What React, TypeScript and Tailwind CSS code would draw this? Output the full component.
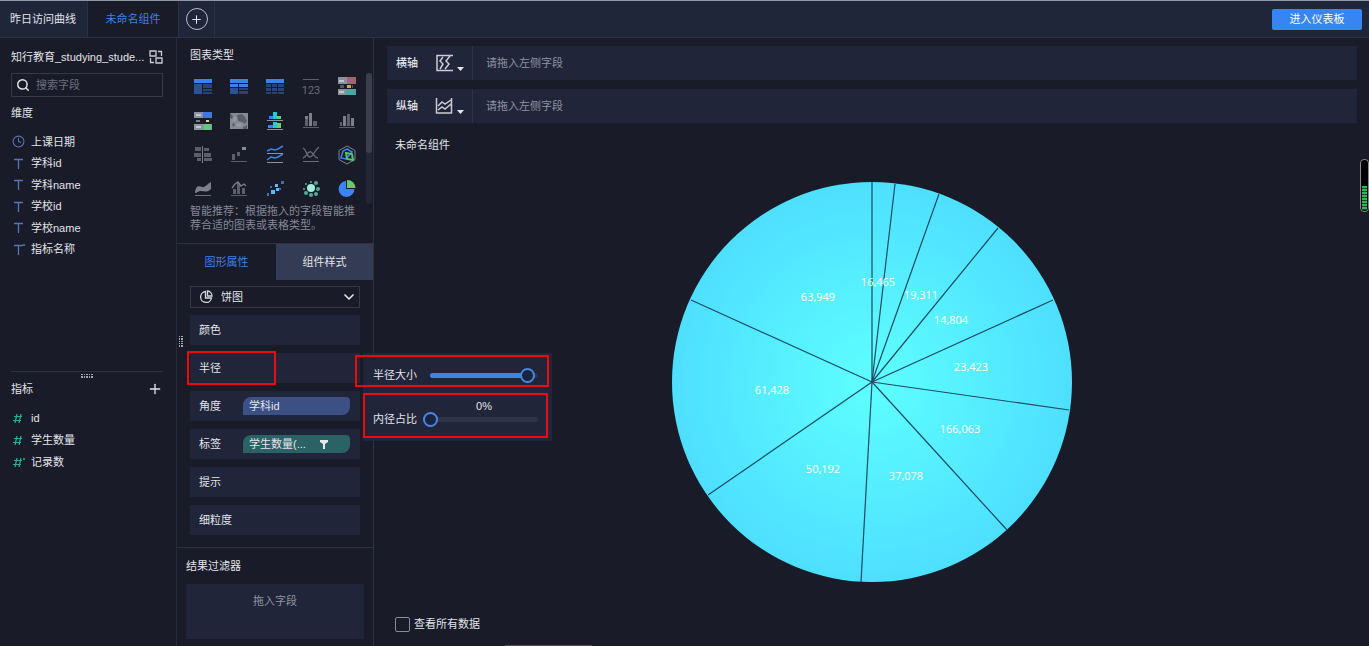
import React, { useState } from 'react'
import { ChevronDown, Clock, Plus, Search } from 'lucide-react'

const dimensions = [
  { name: '上课日期', type: 'date' },
  { name: '学科id', type: 'text' },
  { name: '学科name', type: 'text' },
  { name: '学校id', type: 'text' },
  { name: '学校name', type: 'text' },
  { name: '指标名称', type: 'calc' },
]

const metrics = [
  { name: 'id', calc: false },
  { name: '学生数量', calc: false },
  { name: '记录数', calc: true },
]

// outer end of every line between two slices
const sliceEdges = [
  [200, 0],
  [223, 2],
  [267, 12],
  [326, 46],
  [381, 118],
  [397, 228],
  [335, 348],
  [189, 400],
  [36, 313],
  [19, 118],
]

const sliceLabels = [
  { x: 206, y: 100, value: '16,465' },
  { x: 249, y: 113, value: '19,311' },
  { x: 279, y: 138, value: '14,804' },
  { x: 299, y: 185, value: '23,423' },
  { x: 288, y: 247, value: '166,063' },
  { x: 234, y: 294, value: '37,078' },
  { x: 151, y: 287, value: '50,192' },
  { x: 100, y: 208, value: '61,428' },
  { x: 146, y: 115, value: '63,949' },
]

const chartIcons = [
  // tables
  <>
    <path fill="#3b82ee" d="M0 1h18v4H0z" />
    <path fill="#2b5292" d="M0 6h8v10H0z" />
    <path fill="#26447a" d="M9 6h9v4H9zM9 11h9v2H9zM9 14h9v2H9z" />
  </>,
  <>
    <path fill="#3b82ee" d="M0 1h18v4H0zM0 6h8v3H0zM9 6h9v3H9z" />
    <path fill="#2b5292" d="M0 10h8v6H0z" />
    <path fill="#26447a" d="M9 10h9v2H9zM9 13h9v3H9z" />
  </>,
  <>
    <path fill="#3b82ee" d="M0 1h18v4H0z" />
    <path fill="#26447a" d="M0 6h5v3H0zM6 6h5v3H6zM12 6h6v3h-6zM0 10h5v3H0zM6 10h5v3H6zM12 10h6v3h-6zM0 14h5v2H0zM6 14h5v2H6zM12 14h6v2h-6z" />
  </>,
  // indicator card
  <>
    <path fill="#5c5f6a" d="M1 1h16v1H1z" />
    <text x="9" y="16" textAnchor="middle" fontSize="11" fontFamily="Liberation Sans Narrow, Roboto, sans-serif" fill="#6a6d78">123</text>
  </>,
  // detail blocks
  <>
    <path fill="#8d919d" d="M0 -1h10v7H0zM0 11h9v6H0z" />
    <path fill="#a3656e" d="M9 -1h9v7H9z" />
    <path fill="#4fa6a0" d="M8 11h10v6H8z" />
    <path fill="#c3c6cd" d="M1 2h5v2H1zM1 13h5v2H1z" />
    <path fill="#555967" d="M2 7h4v3H2zM14 7h1v3h-1z" />
    <path fill="#e2a13a" d="M9 7h4v3H9z" />
  </>,
  <>
    <path fill="#8d919d" d="M0 0h10v6H0zM0 12h10v6H0zM17 12h1v6h-1z" />
    <path fill="#3f78dc" d="M9 0h9v6H9z" />
    <path fill="#5fca7a" d="M10 12h7v6h-7z" />
    <path fill="#c3c6cd" d="M2 2h5v2H2zM2 14h5v2H2z" />
    <path fill="#777b86" d="M2 8h4v2H2z" />
    <path fill="#f2d24a" d="M12 8h3v2h-3z" />
  </>,
  // map
  <>
    <path fill="#868a95" d="M0 1h18v16H0z" />
    <path fill="#5a5e6b" d="M0 1l3 3-1 3-2-1zM7 3l5-1 3 3 2 4-2 3-3-2-4-1zM2 12l2-1 1 2-2 2zM13 15l4-2v4h-4z" />
    <path fill="#9699a2" d="M4 4l3 1-1 4H3zM6 12l5-1 1 3-5 1z" />
  </>,
  // column charts
  <>
    <path fill="#8d919d" d="M1 8h16v1H1zM1 17h16v1H1z" />
    <path fill="#3b82ee" d="M3 4h4v3H3zM2 13h5v3H2z" />
    <path fill="#27c8d8" d="M7 0h4v7H7zM7 10h4v6H7z" />
    <path fill="#65d272" d="M11 4h4v3h-4zM11 11h4v5h-4z" />
  </>,
  <>
    <path fill="#5c5f6a" d="M1 15h16v1H1zM3 7h3v7H3zM11 9h4v5h-4z" />
    <path fill="#7c7f8a" d="M7 1h3v13H7zM3 4h3v3H3z" />
  </>,
  <>
    <path fill="#5c5f6a" d="M1 15h16v1H1zM2 10h2v4H2zM9 2h3v12H9z" />
    <path fill="#7c7f8a" d="M5 4h3v10H5zM13 6h3v8h-3z" />
  </>,
  // bar and waterfall charts
  <>
    <path fill="#7c7f8a" d="M8 0h1v17H8z" />
    <path fill="#5c5f6a" d="M1 1h6v4H1zM10 2h5v3h-5zM0 7h7v4H0zM10 7h7v4h-7zM3 12h4v3H3zM10 12h8v3h-8z" />
  </>,
  <>
    <path fill="#5c5f6a" d="M1 15h16v1H1zM2 8h3v6H2zM7 6h3v4H7z" />
    <path fill="#868a95" d="M12 1h4v3h-4z" />
  </>,
  // line charts
  <g fill="none">
    <path stroke="#3b82ee" strokeWidth="1.5" d="M1 5l4-2 4 1 3-1 5-3M1 14l4-3 4 1 3-1 5-3" />
    <path stroke="#8d919d" d="M1 7.500h16M1 16.500h16" />
  </g>,
  <g fill="none" stroke="#6a6d78">
    <path d="M1 15.500h16" />
    <path strokeWidth="1.300" d="M1 2c3 1 4 9 7 9s4-6 9-10M1 12c4-1 5-8 8-6s4 6 7 6" />
  </g>,
  // radar
  <g fill="none">
    <path stroke="#7e828d" d="M9 0l8 4.500v9L9 18l-8-4.500v-9z" />
    <path stroke="#3b82ee" strokeWidth="1.500" d="M9 3l5 3-6 7-5-1 2-7z" />
    <path stroke="#4fc878" strokeWidth="2" d="M8 7l6 1 1 6-6-1z" />
  </g>,
  // area
  <>
    <path fill="#7c7f8a" d="M1 12c1-7 4-6 7-5s5-3 9-5v7c-4 4-7 2-10 2s-4 2-6 2z" />
    <path fill="#6a6d78" d="M1 15h16v1H1z" />
  </>,
  <>
    <path fill="#5c5f6a" d="M1 15h16v1H1zM3 9h3v5H3zM7 3h3v11H7zM12 8h3v6h-3z" />
    <path fill="none" stroke="#7c7f8a" strokeWidth="1.300" d="M2 8l3-4 3-2 3 4 3-2 2 2" />
  </>,
  // scatter
  <>
    <path fill="#3b6fb8" d="M1 13h2v3H1zM15 1h3v3h-3zM4 6h2v2H4zM13 8h2v2h-2z" />
    <path fill="#62b6e8" d="M5 10h4v4H5zM10 8h3v3h-3zM9 4h3v3H9z" />
  </>,
  <>
    <circle cx="9" cy="8" r="4" fill="#a5ecdc" />
    <g fill="#4cae9a">
      <circle cx="9" cy="2" r="1" />
      <circle cx="14" cy="3" r="2" />
      <circle cx="16" cy="9" r="2" />
      <circle cx="14" cy="14" r="2" />
      <circle cx="9" cy="15" r="2" />
      <circle cx="4" cy="13" r="2" />
      <circle cx="2" cy="9" r="1" />
      <circle cx="4" cy="4" r="1" />
    </g>
  </>,
  // pie
  <>
    <path fill="#3b82f2" d="M8 1a8 8 0 1 0 8.500 8H8z" />
    <path fill="#62cb6a" d="M9 0a8 8 0 0 1 8.500 8H9z" />
  </>,
]

const FieldIcon = ({ type }: { type: string }) => {
  if (type === 'date') {
    return <Clock size={13} strokeWidth={2} className="text-[#5875b8]" />
  }
  return (
    <svg width="13" height="13" viewBox="0 0 13 13" className="text-[#5875b8]">
      <path fill="none" stroke="currentColor" strokeWidth="1.300" d="M2 2.500h9M6.500 2.500V12" />
      {type === 'calc' && <circle cx="12" cy="2" r="1" fill="currentColor" />}
    </svg>
  )
}

const HashIcon = ({ calc }: { calc: boolean }) => (
  <svg width="13" height="13" viewBox="0 0 13 13" className="text-[#35a896]">
    <path fill="none" stroke="currentColor" strokeWidth="1.200" d="M5 2L3 11M9 2L7 11M2 4.500h8M1 8.500h8" />
    {calc && <circle cx="12" cy="3" r="1" fill="currentColor" />}
  </svg>
)

const AxisRow = ({ label, rotated }: { label: string; rotated?: boolean }) => (
  <div className="flex h-[34px] items-center bg-[#20253a]">
    <span className="w-12 pl-[9px] font-medium">{label}</span>
    <button className="flex h-full w-[38px] items-center border-r border-[#2c3348] text-[#c9ccd4]">
      <svg width="18" height="18" viewBox="0 0 18 18" fill="none" stroke="currentColor" strokeWidth="1.500" className="shrink-0">
        {rotated ? (
          <path d="M1.500 1v15h15V1M3 9l4-4 3 2 6-4M3 13l4-3 3 2 6-5" />
        ) : (
          <path d="M18 1.500H2v15h16M8 3L5 7l3 3-3 5M15 2l-4 5 3 3-4 5" />
        )}
      </svg>
      <svg width="8" height="5" viewBox="0 0 8 5" className="mt-3 ml-1 shrink-0">
        <path fill="#e4e6ea" d="M0 0h7L3.500 4z" />
      </svg>
    </button>
    <span className="pl-[13px] text-[#8e929f]">请拖入左侧字段</span>
  </div>
)

const Slider = ({ id, label, value, onChange, children }: {
  id: string
  label: string
  value: number
  onChange: (v: number) => void
  children?: React.ReactNode
}) => (
  <div className="flex h-[22px] items-center">
    <label htmlFor={id} className="w-[50px] shrink-0">{label}</label>
    <div className="relative flex h-full flex-1 items-center">
      {children}
      <div className="mx-[7px] h-[5px] flex-1 rounded-full bg-[#2e3347]">
        <div className="h-full rounded-full bg-[#3b82ee]" style={{ width: `${value}%` }} />
      </div>
      <input
        id={id}
        type="range"
        min={0}
        max={100}
        value={value}
        onChange={(e) => onChange(Number(e.target.value))}
        className="absolute inset-0 w-full appearance-none bg-transparent [&::-webkit-slider-thumb]:size-[15px] [&::-webkit-slider-thumb]:appearance-none [&::-webkit-slider-thumb]:rounded-full [&::-webkit-slider-thumb]:border-2 [&::-webkit-slider-thumb]:border-solid [&::-webkit-slider-thumb]:border-[#4a86dc] [&::-webkit-slider-thumb]:bg-[#192440]"
      />
    </div>
  </div>
)

const PropertyRow = ({ label, children }: { label: string; children?: React.ReactNode }) => (
  <div className="relative flex h-[30px] items-center bg-[#20253a] pl-[9px]">
    <span className="w-11">{label}</span>
    {children}
  </div>
)

const RadiusPanel = () => {
  const [radius, setRadius] = useState(91)
  const [inner, setInner] = useState(0)
  return (
    <div className="absolute top-0 left-[173px] z-20 h-[88px] w-[189px] bg-[#20253a] pt-[11px] pr-[7px] pl-[10px]">
      <Slider id="radius" label="半径大小" value={radius} onChange={setRadius} />
      <div className="mt-[22px]">
        <Slider id="inner" label="内径占比" value={inner} onChange={setInner}>
          <output htmlFor="inner" className="absolute inset-x-0 -top-2 text-center leading-3">{inner}%</output>
        </Slider>
      </div>
      <div className="pointer-events-none absolute top-[2px] right-[3px] -left-2 h-8 border-2 border-[#ea0c0c]" />
      <div className="pointer-events-none absolute top-10 right-1 left-0 h-[45px] border-2 border-[#ea0c0c]" />
    </div>
  )
}

const PieChart = () => (
  <svg viewBox="0 0 400 400" className="mx-auto mt-[29px] w-[400px]">
    <defs>
      <radialGradient id="pie">
        <stop offset="0" stopColor="#5effff" />
        <stop offset="1" stopColor="#4edfff" />
      </radialGradient>
    </defs>
    <circle cx="200" cy="200" r="200" fill="url(#pie)" />
    <g stroke="#1b4a63" strokeWidth="1.200">
      {sliceEdges.map(([x, y]) => (
        <line key={`${x}-${y}`} x1="200" y1="200" x2={x} y2={y} />
      ))}
    </g>
    <g fill="#fff" fontSize="11" fontWeight="500" fontFamily="Open Sans, sans-serif" textAnchor="middle">
      {sliceLabels.map((s) => (
        <text key={s.value} x={s.x} y={s.y + 4}>{s.value}</text>
      ))}
    </g>
  </svg>
)

const App = () => {
  const [showAll, setShowAll] = useState(false)
  return (
    <div className="flex min-h-screen flex-col bg-[#191b29] font-['Liberation_Sans','Noto_Sans_CJK_SC',sans-serif] text-[11px] leading-4 text-[#e2e4e9]">
      <header className="flex h-[38px] items-stretch border-t border-b border-t-[#8d95a5] border-b-[#2c3246] bg-[#20263a]">
        <button className="w-[88px] border-r border-[#2c3246] pr-px">昨日访问曲线</button>
        <button className="w-[91px] border-r border-[#2c3246] bg-[#191b29] text-[#3d80ea]">未命名组件</button>
        <button className="flex w-9 items-center justify-center border-r border-[#2c3246]">
          <span className="flex size-[22px] items-center justify-center rounded-full border border-[#b9bcc6]">
            <Plus size={13} strokeWidth={2} />
          </span>
        </button>
        <button className="mr-[7px] ml-auto h-[21px] w-[90px] self-center rounded-xs bg-[#3685f2] text-white">进入仪表板</button>
      </header>

      <div className="flex flex-1">
        <aside className="flex w-[177px] shrink-0 flex-col border-r border-[#262a3b] pr-[13px] pl-[11px]">
          <div className="flex-1">
            <div className="flex items-center justify-between pt-[11px]">
              <span className="whitespace-nowrap">知行教育_studying_stude...</span>
              <svg width="14" height="14" viewBox="0 0 14 14" fill="none" stroke="#c9ccd4" strokeWidth="1.300" className="shrink-0">
                <path d="M1 1h6v5H1zM7 8h6v5H7zM9 1.500h3.500V6M1.500 8v4.500H5" />
              </svg>
            </div>
            <label className="mt-2 flex h-6 items-center gap-[6px] border border-[#343849] px-1">
              <Search size={14} strokeWidth={2.5} className="shrink-0" />
              <input placeholder="搜索字段" className="w-full min-w-0 bg-transparent outline-none placeholder:text-[#6b6f7d]" />
            </label>
            <h2 className="mt-2">维度</h2>
            <ul className="mt-[10px] grid h-[129px] grid-rows-6">
              {dimensions.map((d) => (
                <li key={d.name} className="flex items-center gap-[6px] pl-px">
                  <FieldIcon type={d.type} />
                  {d.name}
                </li>
              ))}
            </ul>
          </div>
          <div className="h-[275px] border-t border-[#2c3040]">
            <svg width="12" height="4" className="mx-auto mt-[2px]" fill="#a4a7b0">
              <path d="M0 0h2v1H0zM3 0h1v1H3zM5 0h2v1H5zM8 0h1v1H8zM10 0h2v1h-2zM0 2h2v2H0zM3 2h1v2H3zM5 2h2v2H5zM8 2h1v2H8zM10 2h2v2h-2z" />
            </svg>
            <div className="mt-[3px] flex items-center justify-between">
              <h2>指标</h2>
              <button>
                <Plus size={16} strokeWidth={2} />
              </button>
            </div>
            <ul className="mt-[10px]">
              {metrics.map((m) => (
                <li key={m.name} className="flex h-[22px] items-center gap-[6px] pl-px">
                  <HashIcon calc={m.calc} />
                  {m.name}
                </li>
              ))}
            </ul>
          </div>
        </aside>

        <section className="relative w-[197px] shrink-0 border-r border-[#2c3040] pb-[7px]">
          <h2 className="pt-[9px] pl-[13px]">图表类型</h2>
          <div className="mt-[10px] flex justify-between pr-px pl-[17px]">
            <div className="grid grid-cols-[repeat(5,18px)] gap-x-[18px] gap-y-4 pt-[5px] pb-[6px]">
              {chartIcons.map((icon, i) => (
                <button key={i} className="size-[18px]">
                  <svg width="18" height="18" viewBox="0 0 18 18" className="overflow-visible">{icon}</svg>
                </button>
              ))}
            </div>
            <div className="w-[6px] rounded-full bg-[#232636]">
              <div className="h-20 rounded-full bg-[#3b3e4c]" />
            </div>
          </div>
          <p className="border-b border-[#2c3040] pr-4 pb-[11px] pl-[13px] leading-[14px] text-[#858996]">
            智能推荐：根据拖入的字段智能推荐合适的图表或表格类型。
          </p>

          <div className="flex h-9">
            <button className="w-[99px] text-[#3d80ea]">图形属性</button>
            <button className="flex-1 bg-[#343b54]">组件样式</button>
          </div>

          <div className="mr-[13px] ml-[13px]">
            <div className="relative mt-[6px]">
              <svg width="14" height="14" viewBox="0 0 14 14" fill="none" stroke="#d6d8de" strokeWidth="1.300" className="pointer-events-none absolute top-1 left-[9px]">
                <path d="M6.500 1.500A5.500 5.500 0 1 0 12.500 8H6.500zM8.500 1v5H13A5 5 0 0 0 8.500 1z" />
              </svg>
              <select aria-label="图表类型" className="h-[22px] w-full appearance-none border border-[#343849] bg-transparent pl-[30px]">
                <option>饼图</option>
              </select>
              <ChevronDown size={16} strokeWidth={2.5} className="pointer-events-none absolute top-[3px] right-[3px]" />
            </div>
            <div className="mt-[7px] flex flex-col gap-2">
              <PropertyRow label="颜色" />
              <PropertyRow label="半径">
                <div className="pointer-events-none absolute -top-[2px] -left-[3px] h-[34px] w-[89px] border-2 border-[#ea0c0c]" />
                <RadiusPanel />
              </PropertyRow>
              <PropertyRow label="角度">
                <span className="h-[18px] w-[107px] rounded-tl-lg rounded-tr-sm rounded-br-lg bg-[#3c5083] pl-[6px] leading-[18px]">学科id</span>
              </PropertyRow>
              <PropertyRow label="标签">
                <span className="flex h-[18px] w-[107px] items-center rounded-tl-lg rounded-tr-sm rounded-br-lg bg-[#2a6266] pl-[6px]">
                  <span className="w-[71px]">学生数量(...</span>
                  <svg width="8" height="9" viewBox="0 0 8 9" fill="#e4e6ea">
                    <path d="M0 0h8v2L5 4v5H3V4L0 2z" />
                  </svg>
                </span>
              </PropertyRow>
              <PropertyRow label="提示" />
              <PropertyRow label="细粒度" />
            </div>
          </div>

          <div className="mt-3 border-t border-[#2c3040] px-[9px] pt-[10px]">
            <h2>结果过滤器</h2>
            <div className="mt-[10px] h-[55px] bg-[#20253a] pt-[9px] text-center text-[#8e929f]">拖入字段</div>
          </div>

          {/* drag handle of the column */}
          <svg width="4" height="11" className="absolute top-[298px] left-[2px]" fill="#a4a7b0">
            <path d="M0 0h1v1H0zM2 0h2v1H2zM0 2h1v2H0zM2 2h2v2H2zM0 5h1v1H0zM2 5h2v1H2zM0 7h1v1H0zM2 7h2v1H2zM0 9h1v2H0zM2 9h2v2H2z" />
          </svg>
        </section>

        <main className="relative min-w-0 flex-1 pt-2 pr-3 pl-[13px]">
          <div className="flex flex-col gap-[9px]">
            <AxisRow label="横轴" />
            <AxisRow label="纵轴" rotated />
          </div>
          <h1 className="mt-[14px] pl-2">未命名组件</h1>
          <PieChart />
          <label className="mt-[34px] flex w-fit items-center gap-1 pl-2">
            <input
              type="checkbox"
              checked={showAll}
              onChange={(e) => setShowAll(e.target.checked)}
              className="size-[15px] appearance-none rounded-xs border border-[#8a8d98] checked:bg-[#3685f2]"
            />
            查看所有数据
          </label>
          <div className="absolute bottom-0 left-[131px] h-px w-[87px] bg-[#4d4a56]" />
        </main>
      </div>

      <div className="absolute top-[159px] right-0 flex h-[53px] w-[9px] flex-col justify-end rounded-sm border border-[#85888f] bg-black p-px">
        <div className="h-6 bg-[repeating-linear-gradient(#2fb855_0_2px,#0f4a22_2px_3px)]" />
      </div>
    </div>
  )
}

export default App
